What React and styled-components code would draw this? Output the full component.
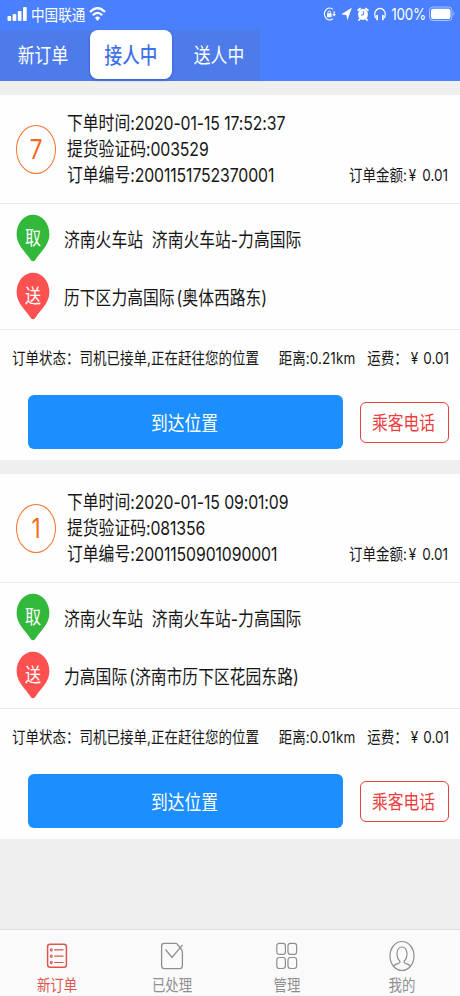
import React from 'react';
import styled, { createGlobalStyle } from 'styled-components';

const Global = createGlobalStyle`
  * { box-sizing: border-box; }
  body { margin: 0; background: #efefef; }
  svg { display: block; flex: none; }
`;

const Screen = styled.div`
  width: 460px;
  height: 996px;
  display: flex;
  flex-direction: column;
  background: #efefef;
  overflow: hidden;
  color: #161616;
  font-family: Inter, 'Noto Sans CJK SC', sans-serif;
`;

/* Tall, narrow lettering: glyphs are stretched vertically around their centre. */
const Label = styled.span`
  display: inline-block;
  white-space: pre;
  font-size: ${(p) => p.$size || 15.8}px;
  letter-spacing: ${(p) => p.$track || 0}px;
  line-height: 20px;
  font-weight: ${(p) => p.$weight || 400};
  transform: translateY(${(p) => p.$drop ?? 1.5}px) scaleY(${(p) => p.$stretch || 1.2});
`;

const Latin = styled.span`
  letter-spacing: ${(p) => p.$track || 0}px;
  margin-left: ${(p) => p.$gap || 0}px;
`;

const Header = styled.header`
  height: 81px;
  flex: none;
  background: #4a80fd;
  color: #fff;
`;

const StatusBar = styled.div`
  height: 30px;
  display: flex;
  align-items: center;
  justify-content: space-between;
  padding: 0 5px 2px 7px;
`;

const StatusGroup = styled.div`
  display: flex;
  align-items: center;
  gap: ${(p) => p.$gap}px;
`;

const Tabs = styled.nav`
  display: flex;
  width: 260px;
  height: 51px;
  background: #4d7bea;
`;

const Tab = styled.div`
  width: ${(p) => p.$width}px;
  height: 49px;
  display: flex;
  align-items: center;
  justify-content: center;
  border-radius: 8px;
  color: ${(p) => (p.$active ? '#3f72e8' : '#fff')};
  background: ${(p) => (p.$active ? '#fff' : 'transparent')};
  box-shadow: ${(p) => (p.$active ? '0 1px 3px rgba(30, 60, 150, .45)' : 'none')};
  margin-right: ${(p) => p.$after || 0}px;
`;

const List = styled.main`
  flex: 1;
  display: flex;
  flex-direction: column;
  gap: 14px;
  padding-top: 14px;
`;

const Card = styled.article`
  height: 365px;
  flex: none;
  background: #fefefe;
`;

const Summary = styled.section`
  height: 109px;
  display: flex;
  align-items: center;
  padding: 0 12px 0 16px;
  border-bottom: 1px solid #ebebeb;
`;

const Number = styled.div`
  width: 40px;
  height: 49px;
  border: 1.5px solid #f5732a;
  border-radius: 50%;
  display: flex;
  align-items: center;
  justify-content: center;
  color: #f56a1c;
`;

const Lines = styled.div`
  display: flex;
  flex-direction: column;
  margin-left: 11px;
  flex: 1;
`;

const Line = styled.div`
  height: 26.3px;
  display: flex;
  align-items: center;
  justify-content: space-between;
`;

const Route = styled.section`
  height: 126px;
  padding: 5px 0 0 16px;
  border-bottom: 1px solid #ebebeb;
`;

const Stop = styled.div`
  height: 58px;
  display: flex;
  align-items: center;
  gap: 14px;
`;

const Pin = styled.div`
  width: 34px;
  height: 48px;
  display: grid;
  color: #fff;
  > * { grid-area: 1 / 1; }
  > span { justify-self: center; align-self: start; margin-top: 12px; }
`;

const StateRow = styled.div`
  height: 55px;
  display: flex;
  align-items: center;
  justify-content: space-between;
  padding: 0 11px 0 12px;
`;

const Fees = styled.div`
  display: flex;
  gap: 12px;
`;

const Actions = styled.div`
  display: flex;
  align-items: center;
  justify-content: space-between;
  padding: 10px 11px 0 28px;
`;

const ArriveButton = styled.button`
  width: 315px;
  height: 54px;
  padding: 0 2px 0 0;
  border: 0;
  border-radius: 6px;
  background: #1c8efe;
  color: #fff;
  font-family: inherit;
`;

const CallButton = styled.button`
  width: 89px;
  height: 41px;
  padding: 0 2px 0 0;
  border: 1px solid #e84040;
  border-radius: 6px;
  background: #fff;
  color: #ec4040;
  font-family: inherit;
`;

const Footer = styled.footer`
  height: 67px;
  flex: none;
  display: grid;
  grid-template-columns: repeat(4, 1fr);
  border-top: 1px solid #dcdcdc;
  background: #fafafa;
`;

const FooterItem = styled.div`
  display: flex;
  flex-direction: column;
  align-items: center;
  padding: 10px 1px 0 0;
  gap: 1px;
  color: ${(p) => (p.$active ? '#dc5650' : '#8f8f8f')};
`;

const Signal = () => (
  <svg width="20" height="16" viewBox="0 0 20 16" fill="#fff">
    <rect x="0.5" y="10" width="3.7" height="5" rx="1" />
    <rect x="5.6" y="8" width="3.7" height="7" rx="1" />
    <rect x="10.8" y="5" width="3.7" height="10" rx="1" />
    <rect x="16" y="1" width="3.7" height="14" rx="1" />
  </svg>
);

const Wifi = () => (
  <svg width="17" height="16" viewBox="0 0 17 16" fill="none" stroke="#fff" strokeWidth="2.3">
    <path d="M1 6Q8.5-1.8 16 6M3.8 9.3Q8.5 4.3 13.2 9.3" />
    <path d="M5.9 11.8Q8.5 9.3 11.1 11.8L8.5 15Z" fill="#fff" stroke="none" />
  </svg>
);

const RotationLock = () => (
  <svg width="13" height="14" viewBox="0 0 13 14" fill="none" stroke="#fff" strokeWidth="1.2">
    <path d="M9.9 2.4A5.1 6 0 1 0 9.9 11.6M10.8 4.2Q11.4 5.5 11.2 7.4" />
    <path d="M9.2 7H13L11.1 9.5Z" fill="#fff" stroke="none" />
    <rect x="4" y="6.2" width="4.6" height="4" rx=".6" fill="#fff" stroke="none" />
    <path d="M5 6.5V5.2Q5 4 6.3 4T7.6 5.2V6.5" strokeWidth=".9" />
  </svg>
);

const Location = () => (
  <svg width="11" height="14" viewBox="0 0 11 14" fill="#fff">
    <path d="M10.8.7 6.4 13.3 5.4 8.2.3 7.3Z" />
  </svg>
);

const Alarm = () => (
  <svg width="12" height="14" viewBox="0 0 12 14" fill="none">
    <ellipse cx="6" cy="7.4" rx="4.9" ry="5.6" fill="#fff" />
    <path d="M1.2 3.2 3 1.6M10.8 3.2 9 1.6M2 13 3.3 11.5M10 13 8.7 11.5" stroke="#fff" strokeWidth="1.9" strokeLinecap="round" />
    <path d="M6.4 4.2V8H3.9" stroke="#4a80fd" strokeWidth="1" />
  </svg>
);

const Headphones = () => (
  <svg width="12" height="14" viewBox="0 0 12 14" fill="none" stroke="#fff">
    <path d="M2 11.2C.4 9 .7 6.1 1.4 4.6 2.3 2.6 4 1.4 6 1.4S9.7 2.6 10.6 4.6C11.3 6.1 11.6 9 10 11.2" strokeWidth="1.2" />
    <path d="M3.1 8.6V12.4M8.9 8.6V12.4" strokeWidth="1.7" strokeLinecap="round" />
  </svg>
);

const Battery = () => (
  <svg width="26" height="16" viewBox="1 0 26 16" fill="none">
    <rect x="1.5" y="1" width="22.5" height="13.5" rx="3.5" stroke="#a9c2ff" />
    <rect x="3" y="2.7" width="19.5" height="10.2" rx="2" fill="#fff" />
    <path d="M25.5 5.4Q27.5 7.8 25.5 10.2Z" fill="#a9c2ff" />
  </svg>
);

const PinShape = ({ color }) => (
  <svg width="34" height="48" viewBox="0 0 34 48">
    <path d="M17 .8C26 .8 33.4 9 33.4 20.5C33.4 31 24 38.5 19.6 45.5Q17 49.2 14.4 45.5C10 38.5.6 31 .6 20.5C.6 9 8 .8 17 .8Z" fill={color} />
  </svg>
);

const OrdersIcon = () => (
  <svg width="22" height="32" viewBox="0 0 22 32" fill="none" stroke="currentColor" strokeWidth="1.2">
    <rect x="1.6" y="4.2" width="18.8" height="23" rx="2.4" strokeWidth="1.5" />
    <path d="M8.2 9.9H17.5M8.2 16.2H17.5M8.2 22.5H17.5" />
    <ellipse cx="5.3" cy="9.9" rx=".8" ry="1.1" />
    <ellipse cx="5.3" cy="16.2" rx=".8" ry="1.1" />
    <ellipse cx="5.3" cy="22.5" rx=".8" ry="1.1" />
  </svg>
);

const DoneIcon = () => (
  <svg width="24" height="32" viewBox="0 0 24 32" fill="none" stroke="currentColor" strokeWidth="1.3">
    <path d="M16.5 3.3H4Q1.6 3.3 1.6 6.2V25.2Q1.6 28.6 4 28.6H20Q22.4 28.6 22.4 25.2V12.5Q22.4 10.5 20.8 8.5L16.5 3.3" />
    <path d="M5.5 9.5 12 17.5 22.4 5.2" />
  </svg>
);

const GridIcon = () => (
  <svg width="24" height="32" viewBox="0 0 24 32" fill="none" stroke="currentColor" strokeWidth="1.2">
    <rect x="1.8" y="3.3" width="8.6" height="11" rx="2.4" />
    <rect x="13" y="3.3" width="8.6" height="11" rx="2.4" />
    <rect x="1.8" y="17.5" width="8.6" height="11" rx="2.4" />
    <rect x="13" y="17.5" width="8.6" height="11" rx="2.4" />
  </svg>
);

const ProfileIcon = () => (
  <svg width="26" height="32" viewBox="0 0 26 32" fill="none" stroke="currentColor" strokeWidth="1.2">
    <ellipse cx="13" cy="16" rx="12" ry="14.5" />
    <path d="M4.5 26Q6.5 24 9.5 23.3 11.5 22.7 10.8 21C6.5 17 7.2 7 13 7S19.5 17 15.2 21Q14.5 22.7 16.5 23.3 19.5 24 21.5 26" />
  </svg>
);

const orders = [
  { number: '7', time: '2020-01-15 17:52:37', code: '003529', id: '2001151752370001', to: ['历下区力高国际', '(奥体西路东)'], distance: '0.21km' },
  { number: '1', time: '2020-01-15 09:01:09', code: '081356', id: '2001150901090001', to: ['力高国际', '(济南市历下区花园东路)'], distance: '0.01km' },
];

const Order = ({ order }) => (
  <Card>
    <Summary>
      <Number><Label $size={22.5} $drop={0.5}>{order.number}</Label></Number>
      <Lines>
        <Line><Label $drop={0.5}>下单时间<Latin $track={-0.1}>:{order.time}</Latin></Label></Line>
        <Line><Label $drop={0.5}>提货验证码<Latin $track={-0.1}>:{order.code}</Latin></Label></Line>
        <Line>
          <Label $drop={0.5}>订单编号<Latin $track={-0.1}>:{order.id}</Latin></Label>
          <Label $size={13.5} $drop={0}>订单金额:<Latin $gap={2}>¥</Latin><Latin $gap={6}>0.01</Latin></Label>
        </Line>
      </Lines>
    </Summary>
    <Route>
      <Stop>
        <Pin><PinShape color="#32b93c" /><Label $size={16}>取</Label></Pin>
        <Label $drop={2.5}>济南火车站  济南火车站-力高国际</Label>
      </Stop>
      <Stop>
        <Pin><PinShape color="#fc5150" /><Label $size={16}>送</Label></Pin>
        <Label $drop={2.5}>{order.to[0]}<Latin $gap={2}>{order.to[1]}</Latin></Label>
      </Stop>
    </Route>
    <StateRow>
      <Label $size={13.5} $drop={-0.5}>订单状态：司机已接单,正在赶往您的位置</Label>
      <Fees>
        <Label $size={13.5} $drop={-0.5}>距离<Latin $track={0.1}>:{order.distance}</Latin></Label>
        <Label $size={13.5} $drop={-0.5}>运费：<Latin $gap={3}>¥</Latin><Latin $gap={5}>0.01</Latin></Label>
      </Fees>
    </StateRow>
    <Actions>
      <ArriveButton><Label $size={16.8}>到达位置</Label></ArriveButton>
      <CallButton><Label>乘客电话</Label></CallButton>
    </Actions>
  </Card>
);

export default function App() {
  return (
    <Screen>
      <Global />
      <Header>
        <StatusBar>
          <StatusGroup $gap={4}>
            <Signal />
            <Label $size={13.6} $drop={1}>中国联通</Label>
            <Wifi />
          </StatusGroup>
          <StatusGroup $gap={3}>
            <StatusGroup $gap={5}>
              <RotationLock /><Location /><Alarm /><Headphones />
              <Label $size={13.4} $drop={0} $track={-0.2}>100%</Label>
            </StatusGroup>
            <Battery />
          </StatusGroup>
        </StatusBar>
        <Tabs>
          <Tab $width={86} $after={4}><Label $size={16.8} $drop={0.5}>新订单</Label></Tab>
          <Tab $width={82} $active><Label $size={17.6} $drop={0.5} $weight={500}>接人中</Label></Tab>
          <Tab $width={94} $after={-12}><Label $size={16.8} $drop={0.5}>送人中</Label></Tab>
        </Tabs>
      </Header>
      <List>
        {orders.map((order) => <Order key={order.id} order={order} />)}
      </List>
      <Footer>
        <FooterItem $active><OrdersIcon /><Label $size={13.4}>新订单</Label></FooterItem>
        <FooterItem><DoneIcon /><Label $size={13.4}>已处理</Label></FooterItem>
        <FooterItem><GridIcon /><Label $size={13.4}>管理</Label></FooterItem>
        <FooterItem><ProfileIcon /><Label $size={13.4}>我的</Label></FooterItem>
      </Footer>
    </Screen>
  );
}
